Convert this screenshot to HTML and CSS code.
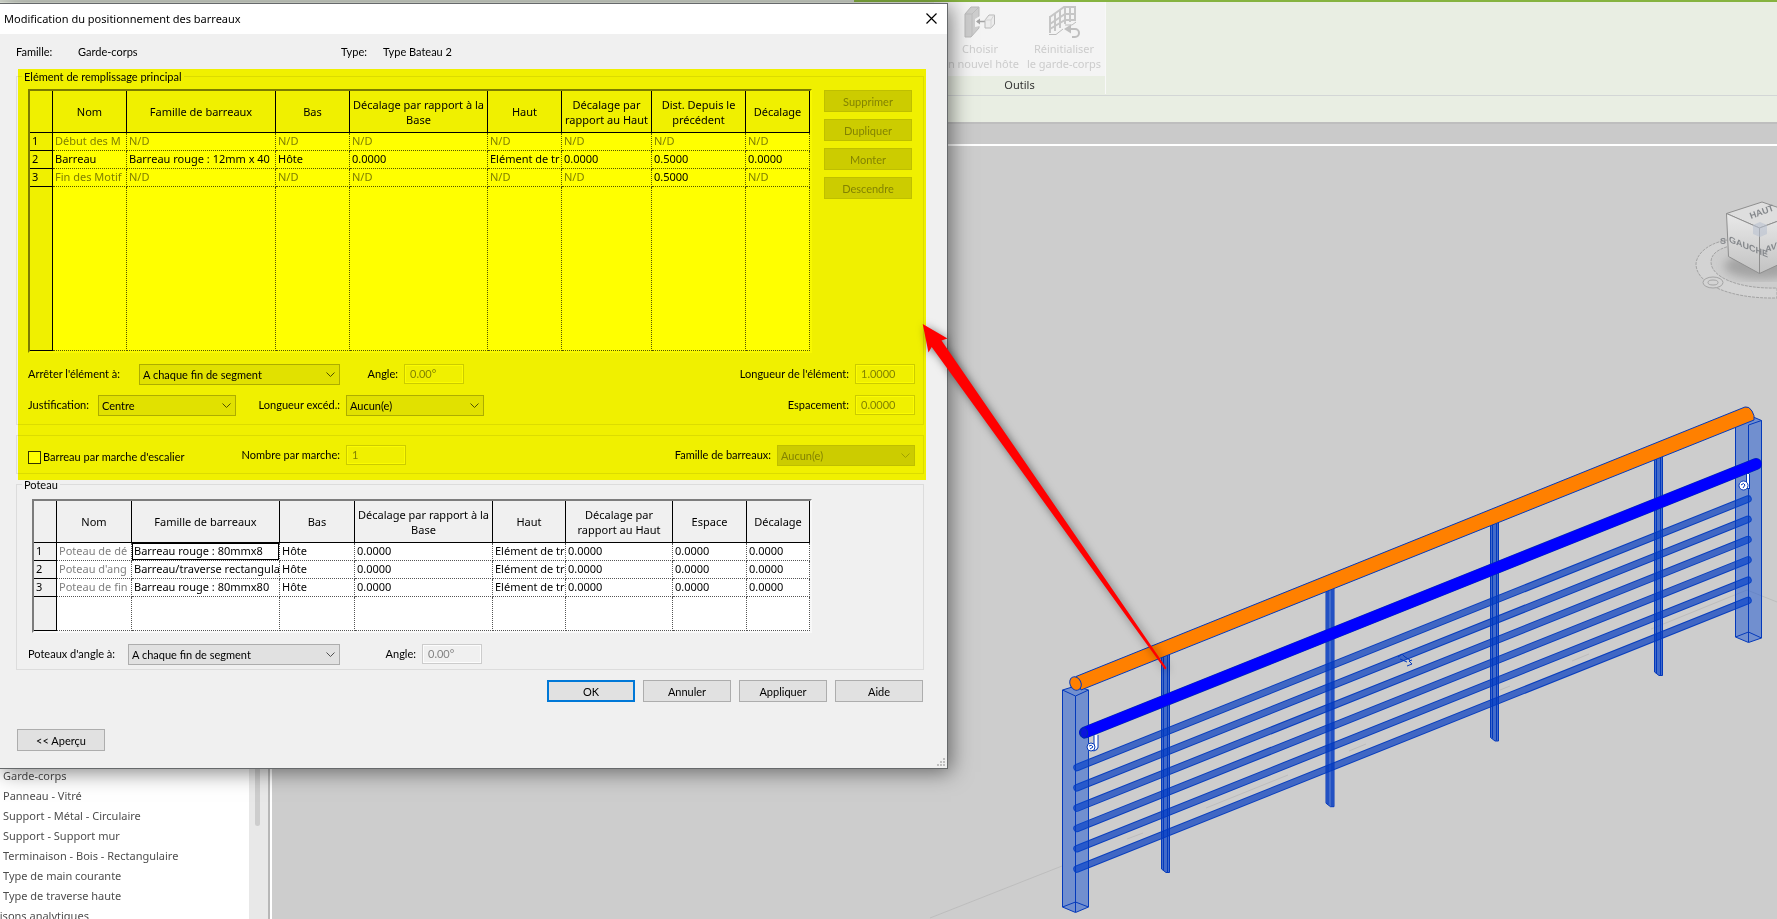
FILE: index.html
```html
<!DOCTYPE html>
<html lang="fr">
<head>
    <meta charset="UTF-8">
    <meta name="viewport" content="width=device-width, initial-scale=1.0">
    <title>Modification du positionnement des barreaux</title>
    <link rel="stylesheet" href="styles.css">
</head>
<body>
    <div class="tab-strip"></div>
    <div class="ribbon">
        <div class="panel">
            <div class="tools">
                <button class="tool pick" disabled>
                    <svg width="32" height="32" viewBox="0 0 32 32">
                        <path d="M1 8 L7 1 H15 V22 L7 31 H1Z" fill="#cdcdcd" stroke="#b9b9b9"/>
                        <path d="M1 8 H8 L15 1 M8 8 V30" fill="none" stroke="#bdbdbd"/>
                        <path d="M11 13 L16 10 V20 L11 21Z" fill="#f4f4f4"/>
                        <path d="M13 15.500 H21" stroke="#a5a5a5" stroke-width="1.500"/>
                        <path d="M12 15.500 L16 12.500 V18.500Z" fill="#a5a5a5"/>
                        <path d="M21 14 L25 9 H30.500 V18 L27 22 H21Z" fill="#ececec" stroke="#b9b9b9"/>
                        <path d="M21 14 H27 L30 9 M27 14 V22" fill="none" stroke="#d4d4d4"/>
                    </svg>
                    <span>Choisir<br>un nouvel hôte</span>
                </button>
                <button class="tool reset" disabled>
                    <svg width="32" height="32" viewBox="0 0 32 32">
                        <path d="M2 11 L16 1 H28 M2 18 L17 8 H28 M2 23 L17 14 H28" fill="none" stroke="#c6c6c6" stroke-width="2"/>
                        <path d="M2 10 V27 M7 7 V25 M12 4 V22 M17 1 V18 M22 1 V16 M27 1 V15" fill="none" stroke="#c6c6c6" stroke-width="2"/>
                        <path d="M1 28.500 H8 L15 23 M17 19 H24 L28 16" fill="none" stroke="#bcbcbc"/>
                        <path d="M20 23 H27 A4 4 0 0 1 27 31 H24" fill="none" stroke="#bfbfbf" stroke-width="2"/>
                        <path d="M16 23 L23 18.500 V27.500Z" fill="#bfbfbf"/>
                    </svg>
                    <span>Réinitialiser<br>le garde-corps</span>
                </button>
            </div>
            <div class="panel-title">Outils</div>
        </div>
    </div>
    <div class="options-bar"></div>

    <div class="workspace">
        <div class="browser">
            <ul class="families">
                <li>Garde-corps</li>
                <li>Panneau - Vitré</li>
                <li>Support - Métal - Circulaire</li>
                <li>Support - Support mur</li>
                <li>Terminaison - Bois - Rectangulaire</li>
                <li>Type de main courante</li>
                <li>Type de traverse haute</li>
                <li class="parent">Liaisons analytiques</li>
            </ul>
            <div class="scrollbar"><div class="thumb"></div></div>
        </div>
        <div class="view">
            <div class="view-tabs"></div>
            <svg class="scene" viewBox="272 146 1505 773" preserveAspectRatio="xMinYMin slice">
                <defs>
                    <linearGradient id="side" x1="0" y1="0" x2="0" y2="1">
                        <stop offset="0" stop-color="#e9e9e9"/>
                        <stop offset="1" stop-color="#c2c2c2"/>
                    </linearGradient>
                    <filter id="soft"><feGaussianBlur stdDeviation="5"/></filter>
                    <g id="bar">
                        <path d="M1077 767.500 L1748 499" stroke="#0a3fbe" stroke-width="7.500" stroke-linecap="round"/>
                        <path d="M1077 767.500 L1748 499" stroke="#4067c4" stroke-width="5.500" stroke-linecap="round"/>
                    </g>
                    <g id="post">
                        <path d="M1161.500 655 V869 L1166 872.500 H1169.500 V652Z" fill="#003cc8" fill-opacity=".68" stroke="#0439bb"/>
                        <path d="M1163.500 655 V870 M1167.500 654 V872" stroke="#0439bb"/>
                    </g>
                </defs>

                <!-- ground lines -->
                <path d="M930 918 L1062 866 M1127 839 L1143 833 M1206 808 L1288 775 M1349 751 L1366 744 M1500 690 L1510 686 M1572 661 L1589 654 M1651 629 L1747 590 L1777 602" fill="none" stroke="#bdbdbd"/>

                <!-- railing -->
                <use href="#bar"/>
                <use href="#bar" y="20.300"/>
                <use href="#bar" y="40.600"/>
                <use href="#bar" y="60.900"/>
                <use href="#bar" y="81.200"/>
                <use href="#bar" y="101.500"/>
                <use href="#post"/>
                <use href="#post" x="164.500" y="-65.800"/>
                <use href="#post" x="329" y="-131.500"/>
                <use href="#post" x="493" y="-197"/>

                <path d="M1062.500 690 L1075.500 686 L1088.500 690 V907 L1075.500 912.500 L1062.500 907Z" fill="#0a4bd2" fill-opacity=".47" stroke="#0439bb"/>
                <path d="M1062.500 690 L1075.500 696 L1088.500 690 M1075.500 696 V912 M1062.500 907 L1075.500 902 L1088.500 907" fill="none" stroke="#0439bb"/>
                <path d="M1735.500 420 L1748.500 415 L1761.500 420.500 V638 L1748.500 642.500 L1735.500 637Z" fill="#0a4bd2" fill-opacity=".47" stroke="#0439bb"/>
                <path d="M1748.500 425 L1761.500 420.500 M1748.500 425 V642 M1735.500 637 L1748.500 632 L1761.500 638" fill="none" stroke="#0439bb"/>

                <path d="M1085 732.500 L1756 464" stroke="#002fa8" stroke-width="12" stroke-linecap="round"/>
                <path d="M1085 732.500 L1756 464" stroke="#0000ff" stroke-width="11" stroke-linecap="round"/>
                <ellipse cx="1084" cy="733" rx="3.500" ry="5" fill="#0a14dc" stroke="#002fa8"/>

                <path d="M1076 676.500 L1745 407 Q1749 406 1752 411 Q1755 416 1754 420 L1081 690Z" fill="#ff8000" stroke="#0439bb"/>
                <ellipse cx="1075.500" cy="683.500" rx="5.500" ry="7" transform="rotate(-25 1075.500 683.500)" fill="#ff8000" stroke="#0439bb"/>

                <path d="M1096 735 V747 Q1095 750 1090 748" fill="none" stroke="#0439bb" stroke-width="5"/>
                <path d="M1096 735 V747 Q1095 750 1090 748" fill="none" stroke="#fff" stroke-width="3"/>
                <circle cx="1091" cy="747" r="4" fill="#fff" stroke="#0439bb"/>
                <path d="M1089 746 Q1092 744 1093 747 L1090 749" fill="none" stroke="#0439bb"/>
                <path d="M1748 474 V487 H1744" fill="none" stroke="#0439bb" stroke-width="4"/>
                <path d="M1748 474 V487 H1744" fill="none" stroke="#fff" stroke-width="2"/>
                <circle cx="1743.500" cy="485.500" r="4.500" fill="#fff" stroke="#0439bb"/>
                <path d="M1741 485 Q1744 482 1745 485 L1743 488" fill="none" stroke="#0439bb"/>
                <path d="M1398 657 L1402 654 L1405 657 L1410 660 M1400 659 L1407 662 M1412 660 L1409 661 L1412 664 L1407 666" fill="none" stroke="#0439bb"/>

                <!-- view cube -->
                <path d="M1727 240 C1704 244 1696 257 1696 264 C1696 284 1730 299 1777 298 V288 C1738 289 1711 277 1711 262 C1711 254 1718 249 1730 246Z" fill="#d3d3d3" stroke="#a3a3a3" stroke-dasharray="3 1"/>
                <ellipse cx="1762" cy="266" rx="38" ry="13" fill="#888" opacity=".6" filter="url(#soft)"/>
                <ellipse cx="1713" cy="282.500" rx="10" ry="5.500" fill="#d3d3d3" stroke="#a3a3a3"/>
                <ellipse cx="1713" cy="282.500" rx="5" ry="2.500" fill="none" stroke="#a3a3a3"/>
                <path d="M1726.500 213.500 L1762 202 L1797 214 L1759.500 228Z" fill="#dedede" stroke="#8f8f8f"/>
                <path d="M1726.500 213.500 L1759.500 228 V273.500 L1728.500 256.500Z" fill="url(#side)" stroke="#8f8f8f"/>
                <path d="M1759.500 228 L1797 214 V256 L1759.500 273.500Z" fill="url(#side)" stroke="#8f8f8f"/>
                <path d="M1753 225 L1760 222 L1767 225 V234 L1760 237 L1753 234Z" fill="#b9c2d0" fill-opacity=".6"/>
                <text class="cube-text" transform="translate(1729 242) skewY(22)">GAUCHE</text>
                <text class="cube-text" transform="translate(1765 253) skewY(-22)">AV</text>
                <text class="cube-text" transform="translate(1751 219) rotate(-20)">HAUT</text>
                <text class="cube-text" x="1720" y="244">S</text>
            </svg>
        </div>
    </div>

    <div class="dialog">
        <div class="title-bar">
            <span>Modification du positionnement des barreaux</span>
            <button class="close" aria-label="Fermer">
                <svg width="11" height="11" viewBox="0 0 11 11"><path d="M.5 .5 L10.500 10.500 M10.500 .5 L.5 10.500" stroke="#000" stroke-width="1.200"/></svg>
            </button>
        </div>
        <div class="dialog-body">
            <div class="info">
                <span>Famille:</span><span>Garde-corps</span><span>Type:</span><span>Type Bateau 2</span>
            </div>

            <div class="highlight">
                <fieldset>
                    <legend>Elément de remplissage principal</legend>
                    <div class="content">
                        <div class="pattern">
                            <div class="grid-frame">
                                <table class="pattern-table">
                                    <colgroup><col class="w23"><col class="w74"><col class="w149"><col class="w74"><col class="w138"><col class="w74"><col class="w90"><col class="w94"><col class="w64"></colgroup>
                                    <thead>
                                        <tr><th></th><th>Nom</th><th>Famille de barreaux</th><th>Bas</th><th>Décalage par rapport à la Base</th><th>Haut</th><th>Décalage par rapport au Haut</th><th>Dist. Depuis le précédent</th><th>Décalage</th></tr>
                                    </thead>
                                    <tbody>
                                        <tr class="off"><th>1</th><td>Début des M</td><td>N/D</td><td>N/D</td><td>N/D</td><td>N/D</td><td>N/D</td><td>N/D</td><td>N/D</td></tr>
                                        <tr><th>2</th><td>Barreau</td><td>Barreau rouge : 12mm x 40</td><td>Hôte</td><td>0.0000</td><td>Elément de tr</td><td>0.0000</td><td>0.5000</td><td>0.0000</td></tr>
                                        <tr class="off"><th>3</th><td>Fin des Motif</td><td>N/D</td><td>N/D</td><td>N/D</td><td>N/D</td><td>N/D</td><td class="on">0.5000</td><td>N/D</td></tr>
                                        <tr class="filler"><th></th><td></td><td></td><td></td><td></td><td></td><td></td><td></td><td></td></tr>
                                    </tbody>
                                </table>
                            </div>
                            <div class="side-buttons">
                                <button class="btn" disabled>Supprimer</button>
                                <button class="btn" disabled>Dupliquer</button>
                                <button class="btn" disabled>Monter</button>
                                <button class="btn" disabled>Descendre</button>
                            </div>
                        </div>
                        <div class="row stop-row">
                            <label for="stop">Arrêter l'élément à:</label>
                            <select id="stop"><option>A chaque fin de segment</option></select>
                            <label for="angle">Angle:</label>
                            <input id="angle" type="text" value="0.00°" disabled>
                            <label for="length">Longueur de l'élément:</label>
                            <input id="length" type="text" value="1.0000" disabled>
                        </div>
                        <div class="row just-row">
                            <label for="just">Justification:</label>
                            <select id="just"><option>Centre</option></select>
                            <label for="excess">Longueur excéd.:</label>
                            <select id="excess"><option>Aucun(e)</option></select>
                            <label for="spacing">Espacement:</label>
                            <input id="spacing" type="text" value="0.0000" disabled>
                        </div>
                    </div>
                </fieldset>
                <fieldset class="stairs">
                    <div class="content">
                        <div class="row stairs-row">
                            <div class="check">
                                <input id="per-tread" type="checkbox">
                                <label for="per-tread">Barreau par marche d'escalier</label>
                            </div>
                            <label for="count">Nombre par marche:</label>
                            <input id="count" type="text" value="1" disabled>
                            <label for="family">Famille de barreaux:</label>
                            <select id="family" disabled><option>Aucun(e)</option></select>
                        </div>
                    </div>
                </fieldset>
            </div>

            <fieldset class="posts">
                <legend>Poteau</legend>
                <div class="content">
                    <div class="grid-frame">
                        <table class="post-table">
                            <colgroup><col class="w23"><col class="w75"><col class="w148"><col class="w75"><col class="w138"><col class="w73"><col class="w107"><col class="w74"><col class="w63"></colgroup>
                            <thead>
                                <tr><th></th><th>Nom</th><th>Famille de barreaux</th><th>Bas</th><th>Décalage par rapport à la Base</th><th>Haut</th><th>Décalage par<br>rapport au Haut</th><th>Espace</th><th>Décalage</th></tr>
                            </thead>
                            <tbody>
                                <tr><th>1</th><td class="dim">Poteau de dé</td><td class="current">Barreau rouge : 80mmx8</td><td>Hôte</td><td>0.0000</td><td>Elément de tr</td><td>0.0000</td><td>0.0000</td><td>0.0000</td></tr>
                                <tr><th>2</th><td class="dim">Poteau d'ang</td><td>Barreau/traverse rectangula</td><td>Hôte</td><td>0.0000</td><td>Elément de tr</td><td>0.0000</td><td>0.0000</td><td>0.0000</td></tr>
                                <tr><th>3</th><td class="dim">Poteau de fin</td><td>Barreau rouge : 80mmx80</td><td>Hôte</td><td>0.0000</td><td>Elément de tr</td><td>0.0000</td><td>0.0000</td><td>0.0000</td></tr>
                                <tr class="filler"><th></th><td></td><td></td><td></td><td></td><td></td><td></td><td></td><td></td></tr>
                            </tbody>
                        </table>
                    </div>
                    <div class="row corner-row">
                        <label for="corner">Poteaux d'angle à:</label>
                        <select id="corner"><option>A chaque fin de segment</option></select>
                        <label for="corner-angle">Angle:</label>
                        <input id="corner-angle" type="text" value="0.00°" disabled>
                    </div>
                </div>
            </fieldset>

            <div class="actions">
                <button class="btn default">OK</button>
                <button class="btn">Annuler</button>
                <button class="btn">Appliquer</button>
                <button class="btn">Aide</button>
            </div>
            <div class="preview">
                <button class="btn">&lt;&lt; Aperçu</button>
            </div>
        </div>
        <svg class="grip" width="8" height="8" viewBox="0 0 8 8"><path d="M6 0h2v2h-2z M3 3h2v2h-2z M6 3h2v2h-2z M0 6h2v2h-2z M3 6h2v2h-2z M6 6h2v2h-2z" fill="#bfbfbf"/></svg>
    </div>

    <svg class="arrow" width="260" height="360" viewBox="915 318 260 360">
        <path d="M922.700 324 L947.500 338.500 L941.500 340.500 L1166.500 668 L1165 669.500 L931.700 347 L928.500 352.500Z" fill="#ff0000"/>
    </svg>
</body>
</html>
```
FILE: styles.css
```css
* {
    box-sizing: border-box;
}
body {
    margin: 0;
    height: 100vh;
    display: flex;
    flex-direction: column;
    position: relative;
    overflow: hidden;
    font-family: "Noto Sans", sans-serif;
    font-size: 11px;
    line-height: 15px;
    color: #000;
    background-color: #cdcdcd;
}
button, input, select {
    font-family: inherit;
    font-size: inherit;
    line-height: inherit;
    color: inherit;
    margin: 0;
}

/* ribbon */
.tab-strip {
    height: 2px;
    background: linear-gradient(to right, #d3d8ce 854px, #86b340 854px);
}
.ribbon {
    height: 94px;
    padding-left: 934px;
    background-color: #e9eee3;
    border-bottom: 1px solid #d3d6d6;
}
.panel {
    width: 172px;
    height: 92px;
    border-right: 1px solid #f8f8f8;
}
.tools {
    display: flex;
    height: 74px;
    padding-top: 4px;
    background-color: #f4f4f4;
}
.tool {
    display: flex;
    flex-direction: column;
    align-items: center;
    padding: 0;
    gap: 3px;
    border: none;
    background: none;
    color: #cccccc;
    white-space: nowrap;
}
.pick {
    width: 92px;
}
.reset {
    width: 76px;
}
.panel-title {
    text-align: center;
    line-height: 18px;
    color: #333;
}
.options-bar {
    height: 28px;
    background-color: #e9eee3;
    border-bottom: 2px solid #bebebe;
}

/* project browser and 3D view */
.workspace {
    flex: 1;
    min-height: 0;
    display: flex;
}
.browser {
    flex: none;
    width: 272px;
    display: flex;
    background-color: #fff;
    border-right: 2px solid #fff;
}
.families {
    flex: 1;
    display: flex;
    flex-direction: column;
    justify-content: flex-end;
    margin: 0 0 -7px;
    padding: 0 0 0 3px;
    list-style: none;
    line-height: 20px;
    color: #4d4d4d;
    white-space: nowrap;
}
.parent {
    text-indent: -18px;
}
.scrollbar {
    width: 21px;
    padding-left: 6px;
    background-color: #e8e8e8;
    border-right: 2px solid #b7b7b7;
}
.thumb {
    width: 5px;
    height: 702px;
    border-radius: 3px;
    background-color: #cdcdcd;
}
.view {
    flex: 1;
    min-width: 0;
    display: flex;
    flex-direction: column;
}
.view-tabs {
    height: 22px;
    background-color: #cacaca;
    border-bottom: 2px solid #fff;
}
.scene {
    flex: 1;
    min-height: 0;
    width: 100%;
}
.cube-text {
    font-family: "Liberation Sans Narrow", sans-serif;
    font-size: 9px;
    font-weight: bold;
    fill: #85888c;
}

/* dialog */
.dialog {
    position: absolute;
    top: 3px;
    left: 0;
    width: 948px;
    max-width: 100%;
    background-color: #f0f0f0;
    border: 1px solid #66696b;
    border-left: none;
    box-shadow: 3px 3px 20px rgba(0, 0, 0, 0.5);
}
.title-bar {
    display: flex;
    justify-content: space-between;
    align-items: center;
    height: 30px;
    padding: 0 10px 2px 4px;
    background-color: #fff;
}
.close {
    display: flex;
    padding: 0;
    border: none;
    background: none;
}
.dialog-body {
    padding: 0 23px 17px 16px;
    font-family: Lato, sans-serif;
}
.info {
    display: grid;
    grid-template-columns: 62px 263px 42px 1fr;
    height: 35px;
    line-height: 35px;
}
.highlight {
    position: relative;
    padding-bottom: 3px;
}
.highlight::after {
    content: "";
    position: absolute;
    inset: 0 -2px -3px 2px;
    background-color: #ffff00;
    mix-blend-mode: multiply;
    pointer-events: none;
}
fieldset {
    margin: 0;
    min-width: 0;
    padding: 0 5px 8px;
    border: 1px solid #dcdcdc;
}
legend {
    padding: 0 2px;
    line-height: 15px;
}
.content {
    padding: 5px 3px 0 6px;
}
.stairs {
    margin-top: 10px;
    padding-bottom: 7px;
}
.stairs .content {
    padding-top: 9px;
}
.posts {
    padding-bottom: 4px;
}
.posts .content {
    padding-top: 7px;
}
.posts .grid-frame {
    margin-left: 4px;
}
.pattern {
    display: flex;
    justify-content: space-between;
}

/* grids */
.grid-frame {
    width: max-content;
    border: 2px solid;
    border-color: #7c7c7c #f8f8f8 #f8f8f8 #7c7c7c;
    font-family: "Noto Sans", sans-serif;
}
table {
    table-layout: fixed;
    border-collapse: separate;
    border-spacing: 0;
    background-color: #fff;
}
.pattern-table {
    width: 780px;
}
.post-table {
    width: 776px;
}
.w23 { width: 23px; }
.w63 { width: 63px; }
.w64 { width: 64px; }
.w73 { width: 73px; }
.w74 { width: 74px; }
.w75 { width: 75px; }
.w90 { width: 90px; }
.w94 { width: 94px; }
.w107 { width: 107px; }
.w138 { width: 138px; }
.w148 { width: 148px; }
.w149 { width: 149px; }
th {
    padding: 0;
    font-weight: normal;
    background-color: #f0f0f0;
    border-right: 1px solid #000;
    border-bottom: 1px solid #000;
}
thead th {
    height: 42px;
}
tbody th {
    padding-left: 2px;
    text-align: left;
    vertical-align: top;
}
td {
    height: 18px;
    padding: 0 0 0 2px;
    overflow: hidden;
    white-space: nowrap;
    vertical-align: top;
    border-right: 1px dotted #555;
    border-bottom: 1px dotted #555;
}
.off td, td.dim {
    color: #808080;
}
.off td.on {
    color: #000;
}
.current {
    box-shadow: inset 0 0 0 1px #000;
}
.pattern-table .filler td {
    height: 164px;
}
.post-table .filler td {
    height: 34px;
}

/* controls */
.btn {
    width: 88px;
    height: 22px;
    padding: 0;
    border: 1px solid #adadad;
    background-color: #e1e1e1;
}
.btn:disabled {
    color: #838383;
    background-color: #cccccc;
    border-color: #bfbfbf;
}
.btn.default {
    border: 2px solid #0078d7;
}
.side-buttons {
    display: flex;
    flex-direction: column;
    gap: 7px;
    padding: 1px 3px 0 0;
}
.row {
    display: grid;
    align-items: start;
    height: 21px;
    margin-top: 10px;
    line-height: 20px;
}
.grid-frame + .row, .pattern + .row {
    margin-top: 11px;
}
.row > label {
    padding-right: 6px;
    text-align: right;
    white-space: nowrap;
}
.row > label:first-child {
    text-align: left;
}
.stop-row {
    grid-template-columns: 111px 201px 64px 60px 1fr 60px;
}
.just-row {
    grid-template-columns: 70px 138px 110px 138px 1fr 60px;
}
.stairs-row {
    grid-template-columns: 200px 118px 60px 1fr 138px;
    margin-top: 0;
}
.corner-row {
    grid-template-columns: 100px 212px 82px 60px;
}
.check {
    display: flex;
    align-items: center;
    gap: 2px;
    height: 24px;
}
input[type="checkbox"] {
    appearance: none;
    width: 13px;
    height: 13px;
    border: 1px solid #333;
    background-color: #fff;
}
input[type="text"] {
    width: 60px;
    height: 20px;
    padding: 0 0 0 5px;
    border: 1px solid #cccccc;
    background-color: #f0f0f0;
    box-shadow: inset 0 0 0 1px #fcfcfc;
    color: #838383;
}
select {
    appearance: none;
    height: 21px;
    padding: 0 20px 0 3px;
    border: 1px solid #adadad;
    border-radius: 0;
    background: #e1e1e1 url("data:image/svg+xml,%3Csvg xmlns='http://www.w3.org/2000/svg' width='9' height='6'%3E%3Cpath d='M.5 .5 L4.500 4.500 L8.500 .5' fill='none' stroke='%23505050'/%3E%3C/svg%3E") no-repeat right 4px center;
}
select:disabled {
    opacity: 1;
    color: #838383;
    border-color: #bfbfbf;
    background: #cccccc url("data:image/svg+xml,%3Csvg xmlns='http://www.w3.org/2000/svg' width='9' height='6'%3E%3Cpath d='M.5 .5 L4.500 4.500 L8.500 .5' fill='none' stroke='%23a0a0a0'/%3E%3C/svg%3E") no-repeat right 4px center;
}
.actions {
    display: flex;
    justify-content: flex-end;
    gap: 8px;
    padding: 10px 1px 0;
}
.preview {
    display: flex;
    padding: 27px 1px 0;
}
.grip {
    position: absolute;
    right: 2px;
    bottom: 2px;
}

/* callout arrow */
.arrow {
    position: absolute;
    top: 318px;
    left: 915px;
    filter: drop-shadow(2px 2px 4px rgba(0, 0, 0, 0.5));
}
```
